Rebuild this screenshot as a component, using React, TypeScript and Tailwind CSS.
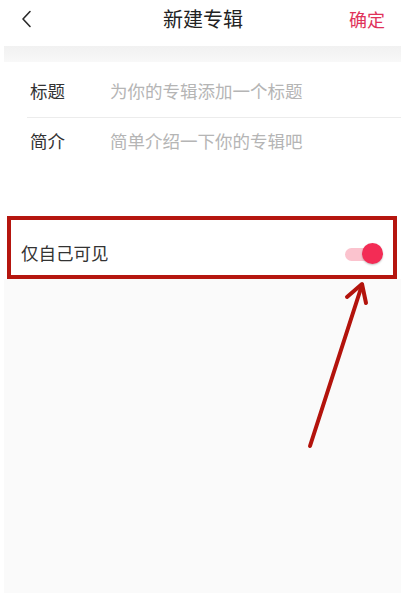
export default function App() {
  return (
    <div
      className="relative w-[405px] h-[593px] overflow-hidden bg-white flex flex-col"
      style={{ fontFamily: '"Noto Sans CJK SC", "Noto Sans", sans-serif' }}
    >
      {/* header */}
      <div className="h-[46px] flex items-start pt-[8px] px-[20px] text-[#222]">
        <svg width="12" height="22" viewBox="0 0 12 22" className="ml-[1px]">
          <path d="M9 3.5 L2 11 L9 18.5" fill="none" stroke="#2a2a2a" strokeWidth="1.6" strokeLinecap="round" strokeLinejoin="round" />
        </svg>
        <div className="flex-1 text-center text-[20px] leading-[22px] ml-[24px]">新建专辑</div>
        <div className="text-[18px] leading-[22px] text-[#e0335a]">确定</div>
      </div>

      <div className="mx-[4px] flex-1 flex flex-col bg-[#fafafa]">
        <div className="h-[16px] bg-gradient-to-b from-[#f1f1f1] to-[#f8f8f8]" />

        {/* form */}
        <div className="bg-white h-[154px]">
          <div className="h-[55px] pt-[3px] flex items-center text-[17.5px] pl-[26px]">
            <span className="w-[80px] text-[#333]">标题</span>
            <span className="text-[#b5b5b5]">为你的专辑添加一个标题</span>
          </div>
          <div className="ml-[23px] h-px bg-[#ececec]" />
          <div className="h-[47px] flex items-center text-[17.5px] pl-[26px]">
            <span className="w-[80px] text-[#333]">简介</span>
            <span className="text-[#b5b5b5]">简单介绍一下你的专辑吧</span>
          </div>
        </div>

        {/* private toggle row */}
        <div className="relative bg-white h-[63px] flex items-center pl-[17px] pr-[18px]">
          <span className="flex-1 text-[17.5px] text-[#333] pt-[12px]">仅自己可见</span>
          <div className="relative w-[38px] h-[22px] mt-[12px]">
            <div className="absolute left-0 top-[5px] w-[28px] h-[13px] rounded-full bg-[#fbc3ce]" />
            <div className="absolute right-0 top-0 w-[21px] h-[21px] rounded-full bg-[#f32c55] shadow-[0_1px_2px_rgba(0,0,0,0.25)]" />
          </div>
          <div className="absolute left-[3px] right-[4px] top-0 bottom-0 border-[4px] border-[#b5160f] pointer-events-none" />
        </div>
      </div>

      {/* annotation arrow */}
      <svg className="absolute left-0 top-0 pointer-events-none" width="405" height="593" viewBox="0 0 405 593">
        <path d="M310 446 L362 285" fill="none" stroke="#b3130c" strokeWidth="4" strokeLinecap="round" />
        <path d="M347 297 L362 284 L366 303" fill="none" stroke="#b3130c" strokeWidth="4" strokeLinecap="round" strokeLinejoin="round" />
      </svg>
    </div>
  );
}
